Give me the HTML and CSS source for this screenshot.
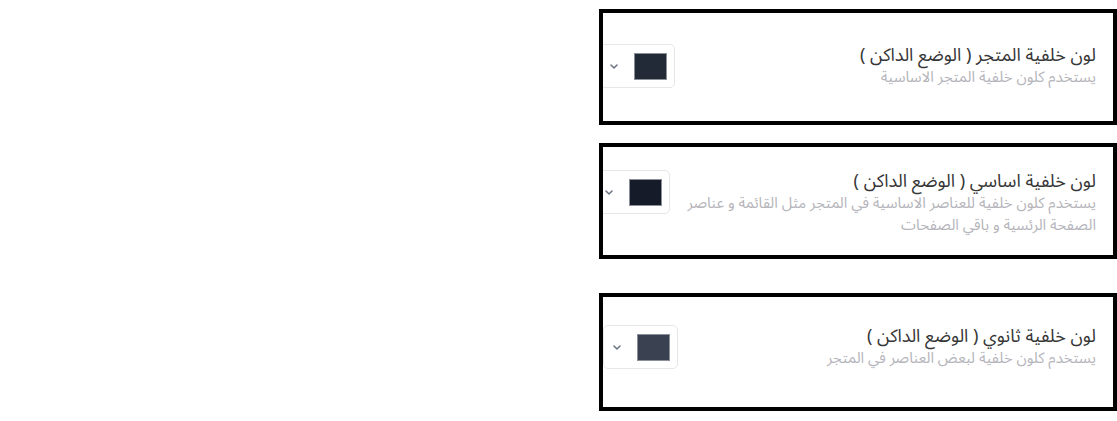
FILE: index.html
```html
<!DOCTYPE html>
<html lang="ar">
<head>
<meta charset="utf-8">
<link rel="stylesheet" href="styles.css">
</head>
<body>
<main class="stack">
  <section class="frame frame-1">
    <div class="row">
      <div class="picker picker-1">
        <svg class="chev" width="8" height="5" viewBox="0 0 8 5"><path d="M1 1l3 3 3-3" fill="none" stroke="#6b7280" stroke-width="1.5" stroke-linecap="round" stroke-linejoin="round"/></svg>
        <span class="swatch swatch-1"></span>
      </div>
      <div class="text">
        <div class="title">لون خلفية المتجر ( الوضع الداكن )</div>
        <div class="desc">يستخدم كلون خلفية المتجر الاساسية</div>
      </div>
    </div>
  </section>
  <section class="frame frame-2">
    <div class="row">
      <div class="picker picker-2">
        <svg class="chev" width="8" height="5" viewBox="0 0 8 5"><path d="M1 1l3 3 3-3" fill="none" stroke="#6b7280" stroke-width="1.5" stroke-linecap="round" stroke-linejoin="round"/></svg>
        <span class="swatch swatch-2"></span>
      </div>
      <div class="text">
        <div class="title">لون خلفية اساسي ( الوضع الداكن )</div>
        <div class="desc">يستخدم كلون خلفية للعناصر الاساسية في المتجر مثل القائمة و عناصر<br>الصفحة الرئسية و باقي الصفحات</div>
      </div>
    </div>
  </section>
  <section class="frame frame-3">
    <div class="row">
      <div class="picker picker-3">
        <svg class="chev" width="8" height="5" viewBox="0 0 8 5"><path d="M1 1l3 3 3-3" fill="none" stroke="#6b7280" stroke-width="1.5" stroke-linecap="round" stroke-linejoin="round"/></svg>
        <span class="swatch swatch-3"></span>
      </div>
      <div class="text">
        <div class="title">لون خلفية ثانوي ( الوضع الداكن )</div>
        <div class="desc">يستخدم كلون خلفية لبعض العناصر في المتجر</div>
      </div>
    </div>
  </section>
</main>
</body>
</html>
```
FILE: styles.css
```css
html, body {
  margin: 0;
  padding: 0;
  background: #ffffff;
}
body {
  width: 1117px;
  height: 421px;
  overflow: hidden;
  font-family: "Noto Sans Arabic", "DejaVu Sans", sans-serif;
}
.stack {
  display: flex;
  flex-direction: column;
  align-items: flex-end;
  padding-top: 9px;
}
.frame {
  box-sizing: border-box;
  width: 518px;
  border: 4px solid #000;
  overflow: hidden;
  background: #fff;
}
.frame-1 { height: 116px; }
.frame-2 { height: 116px; margin-top: 18px; }
.frame-3 { height: 118px; margin-top: 34px; }
.row {
  display: flex;
  justify-content: space-between;
  align-items: flex-start;
  padding-right: 17px;
}
.frame-1 .row { padding-top: 31px; }
.frame-2 .row { padding-top: 23px; }
.frame-3 .row { padding-top: 28px; }
.picker {
  box-sizing: border-box;
  flex: none;
  width: 75px;
  height: 44px;
  border: 1px solid #e6e7ea;
  border-radius: 5px;
  display: flex;
  align-items: center;
  justify-content: space-between;
  padding: 0 7px 0 9px;
  background: #fff;
}
.picker-1 { margin-left: -3px; }
.picker-2 { margin-left: -8px; }
.picker-3 { margin-left: 0; }
.chev { display: block; }
.swatch {
  display: block;
  width: 33px;
  height: 27px;
  box-sizing: border-box;
  border: 1px solid #8a8f98;
}
.swatch-1 { background: #222a38; }
.swatch-2 { background: #161b29; }
.swatch-3 { background: #3a4150; }
.text {
  direction: rtl;
  text-align: right;
}
.title {
  font-size: 18px;
  line-height: 22px;
  color: #363636;
}
.desc {
  font-size: 15px;
  line-height: 22px;
  color: #b5b5bb;
  white-space: nowrap;
}
```
